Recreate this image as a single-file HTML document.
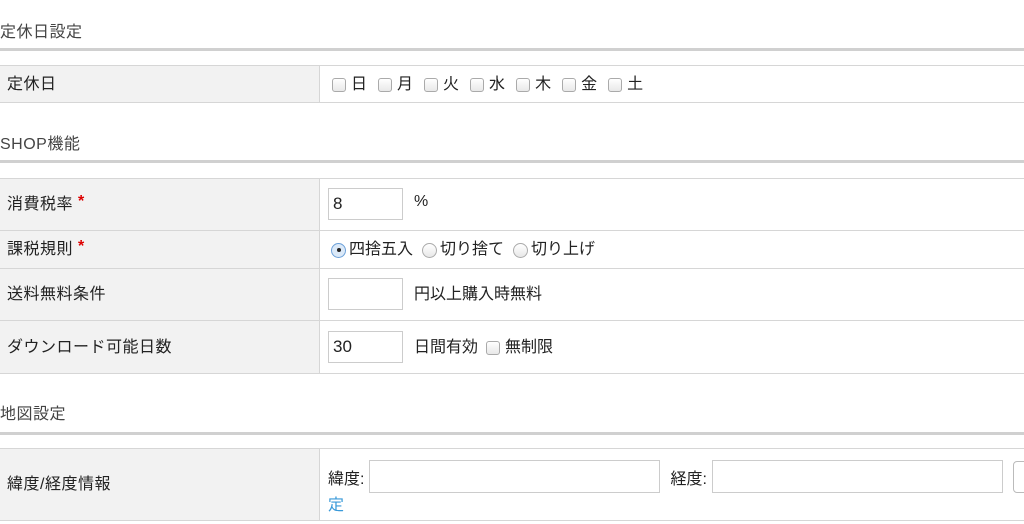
<!DOCTYPE html><html><head><meta charset="utf-8"><style>
body{margin:0;width:1024px;height:524px;overflow:hidden;background:#fff;font-family:"Liberation Sans","Noto Sans CJK JP",sans-serif;font-size:16px;color:#222;position:relative}
.h{position:absolute;left:0;font-size:16px;color:#444;letter-spacing:0.5px}
.bar{position:absolute;left:0;width:1024px;height:3px;background:#d0d0d0}
.row{position:absolute;left:0;width:1024px;border-top:1px solid #d6d6d6;border-bottom:1px solid #d6d6d6;box-sizing:border-box}
.lab{position:absolute;left:0;top:0;bottom:0;width:320px;background:#f2f2f2;border-right:1px solid #d6d6d6;box-sizing:border-box;padding-left:7px;padding-bottom:5px;display:flex;align-items:center;letter-spacing:0.5px}
.v{position:absolute;left:328px;top:0;bottom:0;display:flex;align-items:center;white-space:nowrap;padding-bottom:5px}
.cb{display:inline-block;width:12px;height:12px;border:1px solid #aaa;border-radius:3px;background:linear-gradient(#fff,#e8e8e8);margin:0 5px 0 6px;position:relative;top:3px}
.rd{display:inline-block;width:15px;height:15px;border:1px solid #aaa;border-radius:50%;background:linear-gradient(#fff,#e8e8e8);margin:0 3px 0 4px;box-sizing:border-box;position:relative;top:3px}
.rd.on{border-color:#6a9fd8;background:#dbe9f8}
.rd.on:after{content:"";position:absolute;left:4.5px;top:4.5px;width:4px;height:4px;border-radius:50%;background:#222}
.in{display:inline-flex;align-items:center;width:75px;height:32px;border:1px solid #ccc;box-sizing:border-box;padding:0 4px;font-size:17px;margin-right:11px;position:relative;top:2px}
.req{color:#d00;font-weight:bold;margin-left:5px}
</style></head><body>
<div class="h" style="top:18px">定休日設定</div>
<div class="bar" style="top:48px"></div>
<div class="row" style="top:65px;height:38px"><div class="lab">定休日</div>
<div class="v" style="left:326px"><span class="cb"></span>日<span class="cb" style="margin-left:11px"></span>月<span class="cb" style="margin-left:11px"></span>火<span class="cb" style="margin-left:11px"></span>水<span class="cb" style="margin-left:11px"></span>木<span class="cb" style="margin-left:11px"></span>金<span class="cb" style="margin-left:11px"></span>土</div></div>
<div class="h" style="top:130px">SHOP機能</div>
<div class="bar" style="top:160px"></div>
<div class="row" style="top:178px;height:53px"><div class="lab">消費税率<span class="req">*</span></div><div class="v"><span class="in">8</span>%</div></div>
<div class="row" style="top:230px;height:39px"><div class="lab">課税規則<span class="req">*</span></div><div class="v" style="left:327px"><span class="rd on"></span>四捨五入<span class="rd" style="margin-left:9px"></span>切り捨て<span class="rd" style="margin-left:9px"></span>切り上げ</div></div>
<div class="row" style="top:268px;height:53px"><div class="lab">送料無料条件</div><div class="v"><span class="in"></span>円以上購入時無料</div></div>
<div class="row" style="top:320px;height:54px"><div class="lab">ダウンロード可能日数</div><div class="v"><span class="in">30</span>日間有効 <span class="cb" style="margin-left:8px"></span>無制限</div></div>
<div class="h" style="top:400px">地図設定</div>
<div class="bar" style="top:432px"></div>
<div class="row" style="top:448px;height:73px"><div class="lab">緯度/経度情報</div>
<div style="position:absolute;left:328px;top:11px;white-space:nowrap;display:flex;align-items:center">緯度:<span style="display:inline-block;width:291px;height:33px;border:1px solid #ccc;margin:0 10px 0 5px;box-sizing:border-box"></span>経度:<span style="display:inline-block;width:291px;height:33px;border:1px solid #ccc;margin:0 10px 0 5px;box-sizing:border-box"></span><span style="display:inline-block;width:20px;height:30px;border:1px solid #bbb;border-radius:4px"></span></div>
<div style="position:absolute;left:328px;top:42px;color:#3a9ad9">定</div></div>
</body></html>
